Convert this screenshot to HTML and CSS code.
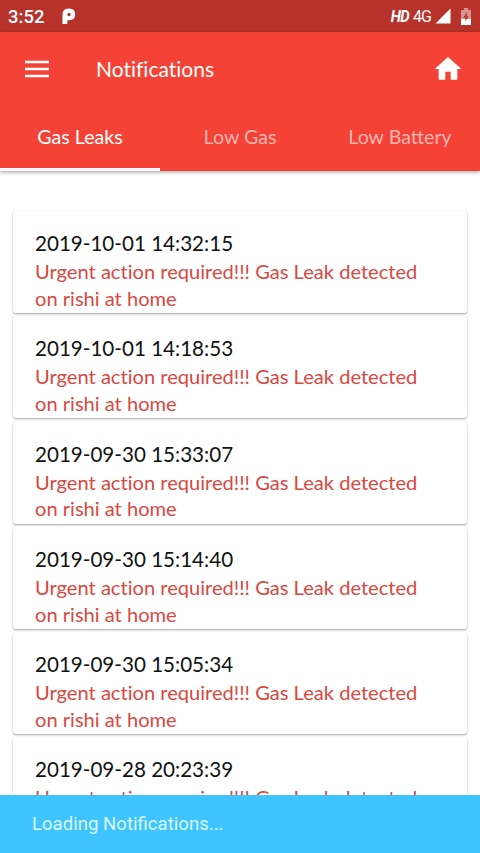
FILE: index.html
```html
<!DOCTYPE html>
<html lang="en">
<head>
<meta charset="utf-8">
<title>Notifications</title>
<link rel="stylesheet" href="styles.css">
</head>
<body>
<div class="app">
  <div class="status">
    <span class="clock">3:52</span>
    <svg class="p-icon" width="14" height="17" viewBox="0 0 14 17"><path fill="#fff" fill-rule="evenodd" d="M0.500 5.500Q1 .5 7 .5Q13.200 .5 13.200 6.500Q13.200 12 7.500 12.200H5.300V16H.5ZM7 4.800A1.700 1.700 0 1 0 7 8.200A1.700 1.700 0 1 0 7 4.800Z"/></svg>
    <span class="hd">HD</span>
    <span class="net">4G</span>
    <svg class="signal" width="16" height="16" viewBox="0 0 16 16"><path fill="#fff" d="M15.500 .5V15.500H.5Z"/></svg>
    <svg class="battery" width="10" height="17" viewBox="0 0 10 17"><path fill="#dc9490" d="M3 0H7V2H10V11H0V2H3Z"/><path fill="#fff" d="M0 11H10V17H0Z"/><path fill="#b7352d" d="M5.800 4L2.300 9.800H4.400V13.300L7.800 8.300H5.800Z"/></svg>
  </div>
  <header class="header">
    <div class="toolbar">
      <svg class="menu" width="24" height="18" viewBox="0 0 24 18"><path fill="#fff" d="M0 .7H24V3.300H0ZM0 7.700H24V10.300H0ZM0 14.700H24V17.300H0Z"/></svg>
      <h1 class="title">Notifications</h1>
      <svg class="home" width="32" height="32" viewBox="0 0 24 24"><path fill="#fff" d="M10 20v-6h4v6h5v-8h3L12 3 2 12h3v8z"/></svg>
    </div>
    <nav class="tabs">
      <div class="tab active">Gas Leaks</div>
      <div class="tab">Low Gas</div>
      <div class="tab">Low Battery</div>
    </nav>
  </header>
  <main class="list">
    <article class="card"><div class="date">2019-10-01 14:32:15</div><div class="message">Urgent action required!!! Gas Leak detected<br>on rishi at home</div></article>
    <article class="card"><div class="date">2019-10-01 14:18:53</div><div class="message">Urgent action required!!! Gas Leak detected<br>on rishi at home</div></article>
    <article class="card"><div class="date">2019-09-30 15:33:07</div><div class="message">Urgent action required!!! Gas Leak detected<br>on rishi at home</div></article>
    <article class="card"><div class="date">2019-09-30 15:14:40</div><div class="message">Urgent action required!!! Gas Leak detected<br>on rishi at home</div></article>
    <article class="card"><div class="date">2019-09-30 15:05:34</div><div class="message">Urgent action required!!! Gas Leak detected<br>on rishi at home</div></article>
    <article class="card"><div class="date">2019-09-28 20:23:39</div><div class="message">Urgent action required!!! Gas Leak detected</div></article>
  </main>
  <footer class="snackbar">Loading Notifications...</footer>
</div>
</body>
</html>
```

FILE: styles.css
```css
* { box-sizing: border-box; }
body { margin: 0; background: #fff; font-family: Lato, "Noto Sans", sans-serif; }
.app { display: flex; flex-direction: column; width: 480px; height: 853px; overflow: hidden; }
.status { flex: none; display: flex; align-items: center; height: 32px; padding: 0 9px 0 8px; background: #b7322b; color: #fff; font-family: Roboto, sans-serif; }
.clock { font-size: 18.5px; font-weight: 500; line-height: 32px; padding-top: 2px; }
.p-icon { margin-left: 18px; }
.hd { margin-left: auto; font-size: 16px; font-weight: 700; font-style: italic; letter-spacing: -.6px; transform: scaleX(.93); }
.net { margin-left: 3px; font-size: 16px; letter-spacing: -1px; }
.signal { margin-left: 4px; }
.battery { margin-left: 10px; }
.header { flex: none; height: 138.5px; background: #f44336; color: #fff; box-shadow: 0 1px 4px rgba(0,0,0,.4); z-index: 1; }
.toolbar { display: flex; align-items: center; height: 74px; padding: 0 16px 0 25px; }
.title { margin: 0 auto 1px 47px; font-size: 21px; font-weight: 400; line-height: 28px; font-variant-ligatures: none; }
.tabs { display: grid; grid-template-columns: repeat(3, 1fr); height: 64.5px; }
.tab { display: flex; justify-content: center; padding-top: 17px; font-size: 19.6px; line-height: 28px; color: #fbb4af; white-space: nowrap; }
.active { color: #fff; border-bottom: 3px solid #fff; }
.list { flex: 1; min-height: 0; overflow: hidden; padding: 40.5px 13px 0; }
.card { height: 102px; margin-bottom: 3.3px; padding: 18px 22px 0; border-radius: 3px; background: #fff; box-shadow: 0 1px 2px rgba(0,0,0,.36); }
.date { color: #111; font-size: 20.6px; line-height: 28px; margin-bottom: 1px; }
.message { color: #d9483f; font-size: 20.1px; line-height: 26.7px; white-space: nowrap; font-variant-ligatures: none; }
.snackbar { flex: none; height: 58px; padding-left: 32px; background: #40c4ff; color: #d9f8ff; font: 400 18.6px/58px Roboto, sans-serif; z-index: 1; }
```
